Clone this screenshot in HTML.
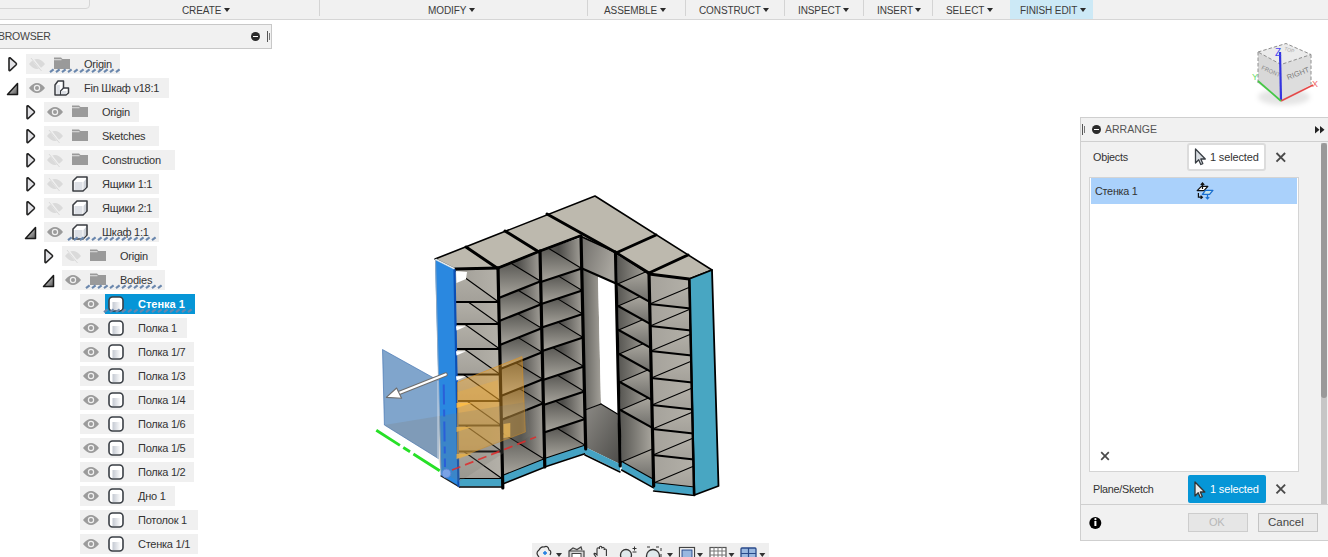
<!DOCTYPE html>
<html><head><meta charset="utf-8">
<style>
*{margin:0;padding:0;box-sizing:border-box}
html,body{width:1328px;height:557px;overflow:hidden;background:#fff;font-family:"Liberation Sans",sans-serif;color:#333}
.a{position:absolute}
.mi{position:absolute;top:5px;font-size:10px;line-height:11px;color:#3c3c3c;white-space:nowrap;letter-spacing:-0.1px}
.tri{display:inline-block;width:0;height:0;border-left:3.5px solid transparent;border-right:3.5px solid transparent;border-top:4.5px solid #2a2a2a;margin-left:2.5px;vertical-align:2px}
.sep{position:absolute;top:0;width:1px;height:16px;background:#d4d4d4}
.row{position:absolute;height:20px;background:#f0f0f0}
.t{position:absolute;font-size:11px;line-height:13px;color:#333;white-space:nowrap;letter-spacing:-0.25px}
</style></head>
<body>

<div class="a" style="left:0;top:0;width:1328px;height:20px;background:#f1f1f1;border-bottom:1px solid #d6d6d6"></div>
<div class="a" style="left:-10px;top:-2px;width:100px;height:11px;border:1px solid #d6d6d6;border-radius:0 0 4px 0;background:#f1f1f1"></div>
<div class="a" style="left:1010px;top:0;width:83px;height:19px;background:#cce9f6"></div>
<div class="mi" style="left:182px">CREATE<span class="tri"></span></div>
<div class="mi" style="left:428px">MODIFY<span class="tri"></span></div>
<div class="mi" style="left:604px">ASSEMBLE<span class="tri"></span></div>
<div class="mi" style="left:699px">CONSTRUCT<span class="tri"></span></div>
<div class="mi" style="left:798px">INSPECT<span class="tri"></span></div>
<div class="mi" style="left:877px">INSERT<span class="tri"></span></div>
<div class="mi" style="left:946px">SELECT<span class="tri"></span></div>
<div class="mi" style="left:1020px">FINISH EDIT<span class="tri"></span></div>
<div class="sep" style="left:319px"></div>
<div class="sep" style="left:587px"></div>
<div class="sep" style="left:685px"></div>
<div class="sep" style="left:784px"></div>
<div class="sep" style="left:863px"></div>
<div class="sep" style="left:932px"></div>
<div class="a" style="left:-2px;top:24px;width:274px;height:25px;background:#f1f1f1;border:1px solid #c8c8c8"></div>
<div class="t" style="left:-2px;top:30px;font-size:10.5px;color:#444;letter-spacing:-0.25px">BROWSER</div>
<div class="a" style="left:251px;top:32px;width:9px;height:9px;border-radius:50%;background:#2b2b2b"></div>
<div class="a" style="left:253px;top:36px;width:5px;height:1px;background:#fff"></div>
<div class="a" style="left:267px;top:31px;width:1px;height:11px;background:#555"></div>
<div class="a" style="left:269px;top:33px;width:1px;height:7px;background:#777"></div>
<div class="row" style="left:26px;top:54px;width:94px"></div>
<div class="t" style="left:84px;top:58px">Origin</div>
<div class="row" style="left:26px;top:78px;width:143px"></div>
<div class="t" style="left:84px;top:82px">Fin Шкаф v18:1</div>
<div class="row" style="left:44px;top:102px;width:95px"></div>
<div class="t" style="left:102px;top:106px">Origin</div>
<div class="row" style="left:44px;top:126px;width:115px"></div>
<div class="t" style="left:102px;top:130px">Sketches</div>
<div class="row" style="left:44px;top:150px;width:131px"></div>
<div class="t" style="left:102px;top:154px">Construction</div>
<div class="row" style="left:44px;top:174px;width:115px"></div>
<div class="t" style="left:102px;top:178px">Ящики 1:1</div>
<div class="row" style="left:44px;top:198px;width:115px"></div>
<div class="t" style="left:102px;top:202px">Ящики 2:1</div>
<div class="row" style="left:44px;top:222px;width:115px"></div>
<div class="t" style="left:102px;top:226px">Шкаф 1:1</div>
<div class="row" style="left:62px;top:246px;width:95px"></div>
<div class="t" style="left:120px;top:250px">Origin</div>
<div class="row" style="left:62px;top:270px;width:103px"></div>
<div class="t" style="left:120px;top:274px">Bodies</div>
<div class="row" style="left:80px;top:294px;width:115px"></div>
<div class="a" style="left:105px;top:294px;width:90px;height:20px;background:#0696d7"></div>
<div class="t" style="left:138px;top:298px;color:#fff;font-weight:bold;letter-spacing:0">Стенка 1</div>
<div class="row" style="left:80px;top:318px;width:107px"></div>
<div class="t" style="left:138px;top:322px">Полка 1</div>
<div class="row" style="left:80px;top:342px;width:114px"></div>
<div class="t" style="left:138px;top:346px">Полка 1/7</div>
<div class="row" style="left:80px;top:366px;width:114px"></div>
<div class="t" style="left:138px;top:370px">Полка 1/3</div>
<div class="row" style="left:80px;top:390px;width:114px"></div>
<div class="t" style="left:138px;top:394px">Полка 1/4</div>
<div class="row" style="left:80px;top:414px;width:114px"></div>
<div class="t" style="left:138px;top:418px">Полка 1/6</div>
<div class="row" style="left:80px;top:438px;width:114px"></div>
<div class="t" style="left:138px;top:442px">Полка 1/5</div>
<div class="row" style="left:80px;top:462px;width:114px"></div>
<div class="t" style="left:138px;top:466px">Полка 1/2</div>
<div class="row" style="left:80px;top:486px;width:95px"></div>
<div class="t" style="left:138px;top:490px">Дно 1</div>
<div class="row" style="left:80px;top:510px;width:118px"></div>
<div class="t" style="left:138px;top:514px">Потолок 1</div>
<div class="row" style="left:80px;top:534px;width:118px"></div>
<div class="t" style="left:138px;top:538px">Стенка 1/1</div>
<div class="a" style="left:1080px;top:117px;width:260px;height:424px;background:#f1f1f1;border:1px solid #cfcfcf"></div>
<div class="a" style="left:1080px;top:141px;width:260px;height:1px;background:#cfcfcf"></div>
<div class="a" style="left:1082px;top:124px;width:1px;height:11px;background:#555"></div>
<div class="a" style="left:1084px;top:126px;width:1px;height:7px;background:#777"></div>
<div class="a" style="left:1092px;top:125px;width:9px;height:9px;border-radius:50%;background:#2b2b2b"></div>
<div class="a" style="left:1094px;top:129px;width:5px;height:1px;background:#fff"></div>
<div class="t" style="left:1105px;top:123px;font-size:10.5px;color:#555;letter-spacing:0">ARRANGE</div>
<div class="t" style="left:1093px;top:151px;font-size:10.8px">Objects</div>
<div class="a" style="left:1187px;top:143px;width:79px;height:28px;background:#fff;border:2px solid #dcdcdc;border-radius:3px"></div>
<div class="t" style="left:1210px;top:151px;font-size:11px;letter-spacing:-0.15px">1 selected</div>
<div class="a" style="left:1321px;top:143px;width:6px;height:361px;background:#c6c6c6"></div><div class="a" style="left:1321px;top:143px;width:6px;height:255px;background:#999;border-radius:3px"></div>
<div class="a" style="left:1089px;top:177px;width:210px;height:295px;background:#fff;border:1px solid #d4d4d4"></div>
<div class="a" style="left:1091px;top:178px;width:206px;height:26px;background:#aad1fb"></div>
<div class="t" style="left:1095px;top:185px;font-size:10.8px">Стенка 1</div>
<div class="t" style="left:1093px;top:483px;font-size:10.8px">Plane/Sketch</div>
<div class="a" style="left:1187.5px;top:475px;width:78px;height:27.5px;background:#0696d7;border-radius:2px"></div>
<div class="t" style="left:1210px;top:483px;font-size:11px;letter-spacing:-0.15px;color:#fff">1 selected</div>
<div class="a" style="left:1080px;top:504px;width:248px;height:1px;background:#cfcfcf"></div>
<div class="a" style="left:1188px;top:513px;width:60px;height:19px;background:#e6e6e6;border:1px solid #cdcdcd"></div>
<div class="t" style="left:1209px;top:516px;font-size:11px;color:#b8b8b8">OK</div>
<div class="a" style="left:1258px;top:513px;width:60px;height:19px;background:#eaeaea;border:1px solid #c4c4c4"></div>
<div class="t" style="left:1268px;top:516px;font-size:11.5px;color:#444;letter-spacing:0">Cancel</div>
<div class="a" style="left:532px;top:543px;width:237px;height:14px;background:#efefef"></div>

<svg class="a" style="left:0;top:0" width="1328" height="557" viewBox="0 0 1328 557">
<defs>
<linearGradient id="gtri" x1="0" y1="0" x2="1" y2="1"><stop offset="0" stop-color="#f4f4f4"/><stop offset="1" stop-color="#555"/></linearGradient>
<linearGradient id="gbody" x1="0" y1="0" x2="1" y2="0"><stop offset="0" stop-color="#c4c9d2"/><stop offset="1" stop-color="#fff"/></linearGradient>
<linearGradient id="gwall" x1="0" y1="0" x2="1" y2="0.3"><stop offset="0" stop-color="#a9a69f"/><stop offset="0.6" stop-color="#6f6d69"/><stop offset="1" stop-color="#3e3d3b"/></linearGradient>
<linearGradient id="gwall2" x1="0" y1="0" x2="1" y2="0"><stop offset="0" stop-color="#44433f"/><stop offset="0.5" stop-color="#7a7873"/><stop offset="1" stop-color="#a8a59e"/></linearGradient>
<linearGradient id="gshelf" x1="0" y1="0" x2="1" y2="0"><stop offset="0" stop-color="#8e8b85"/><stop offset="1" stop-color="#b8b4ab"/></linearGradient>
<linearGradient id="gML" x1="0" y1="0" x2="1" y2="0"><stop offset="0" stop-color="#5a5955"/><stop offset="0.45" stop-color="#4d4c49"/><stop offset="1" stop-color="#a29f98"/></linearGradient>
<linearGradient id="gSML" x1="0" y1="0" x2="0" y2="1"><stop offset="0" stop-color="#5a5955"/><stop offset="1" stop-color="#aaa79f"/></linearGradient>
<linearGradient id="gMR" x1="0" y1="0" x2="1" y2="0"><stop offset="0" stop-color="#585753"/><stop offset="1" stop-color="#aba8a0"/></linearGradient>
<linearGradient id="gSMR" x1="0" y1="0" x2="0" y2="1"><stop offset="0" stop-color="#a9a69e"/><stop offset="1" stop-color="#6e6d69"/></linearGradient>
<linearGradient id="gEL" x1="0" y1="0" x2="1" y2="0"><stop offset="0" stop-color="#a19e97"/><stop offset="1" stop-color="#b4b1a9"/></linearGradient>
<linearGradient id="gER" x1="0" y1="0" x2="1" y2="0"><stop offset="0" stop-color="#a5a29b"/><stop offset="1" stop-color="#b3b0a8"/></linearGradient>
<linearGradient id="gSE" x1="0" y1="0" x2="0" y2="1"><stop offset="0" stop-color="#b3b0a8"/><stop offset="1" stop-color="#a3a099"/></linearGradient>
<linearGradient id="gcor" x1="0" y1="0" x2="1" y2="0.4"><stop offset="0" stop-color="#6f6d69"/><stop offset="1" stop-color="#a8a59e"/></linearGradient>
<linearGradient id="gin" x1="0" y1="0" x2="1" y2="0"><stop offset="0" stop-color="#5c5b57"/><stop offset="1" stop-color="#a29f98"/></linearGradient>
<linearGradient id="gfl" x1="0" y1="0" x2="1" y2="1"><stop offset="0" stop-color="#8c8a85"/><stop offset="1" stop-color="#4d4c49"/></linearGradient>
<filter id="blur2" x="-50%" y="-50%" width="200%" height="200%"><feGaussianBlur stdDeviation="2.5"/></filter>
<linearGradient id="gcube" x1="0" y1="0" x2="0" y2="1"><stop offset="0" stop-color="#f2f2f2"/><stop offset="1" stop-color="#d4d4d4"/></linearGradient>
</defs>
<path d="M9,58.5 L9,70 Q9,71 10,70.5 L16,65 Q17,64 16,63 L10,57.8 Q9,57.5 9,58.5Z" fill="#e2e2e6" stroke="#222" stroke-width="1.6"/>
<path d="M29,64 Q37,54 45,64 Q37,74 29,64Z" fill="#dadada"/>
<line x1="31" y1="57" x2="42" y2="71" stroke="#f0f0f0" stroke-width="2.2"/>
<line x1="31" y1="58" x2="41.5" y2="71" stroke="#dadada" stroke-width="1"/>
<path d="M54,57.5 h7 l1.5,1.5 h7.5 v10 h-16z" fill="#9a9a9a"/>
<rect x="54" y="59.3" width="7.5" height="0.9" fill="#e8e8e8"/>
<path d="M50,72.2 l3.6,-2.8 M56,72.2 l3.6,-2.8 M62,72.2 l3.6,-2.8 M68,72.2 l3.6,-2.8 M74,72.2 l3.6,-2.8 M80,72.2 l3.6,-2.8 M86,72.2 l3.6,-2.8 M92,72.2 l3.6,-2.8 M98,72.2 l3.6,-2.8 M104,72.2 l3.6,-2.8 M110,72.2 l3.6,-2.8 M116,72.2 l3.6,-2.8 " stroke="#6a87ad" stroke-width="2.1" fill="none"/>
<path d="M7.5,94.5 L17.5,94.5 L17.5,83.5 Z" fill="url(#gtri)" stroke="#1a1a1a" stroke-width="1.5" stroke-linejoin="round"/>
<path d="M29,88 Q37,78 45,88 Q37,98 29,88Z" fill="#9b9b9b"/>
<circle cx="37" cy="88" r="2.6" fill="none" stroke="#f0f0f0" stroke-width="1.2"/>
<path d="M55,85 L58,81 L63.5,81 L63.5,88 L68.5,88 L68.5,93 L66,95 L55,95Z" fill="#fff" stroke="#3a3d42" stroke-width="1.5" stroke-linejoin="round"/>
<path d="M60.5,95 L60.5,91 L63.5,88" fill="none" stroke="#3a3d42" stroke-width="1.3"/>
<rect x="56.3" y="85" width="3.5" height="9" fill="#dde0e6"/>
<rect x="61.5" y="91" width="5" height="3" fill="#dde0e6"/>
<path d="M27,106.5 L27,118 Q27,119 28,118.5 L34,113 Q35,112 34,111 L28,105.8 Q27,105.5 27,106.5Z" fill="#e2e2e6" stroke="#222" stroke-width="1.6"/>
<path d="M47,112 Q55,102 63,112 Q55,122 47,112Z" fill="#9b9b9b"/>
<circle cx="55" cy="112" r="2.6" fill="none" stroke="#f0f0f0" stroke-width="1.2"/>
<path d="M72,105.5 h7 l1.5,1.5 h7.5 v10 h-16z" fill="#9a9a9a"/>
<rect x="72" y="107.3" width="7.5" height="0.9" fill="#e8e8e8"/>
<path d="M27,130.5 L27,142 Q27,143 28,142.5 L34,137 Q35,136 34,135 L28,129.8 Q27,129.5 27,130.5Z" fill="#e2e2e6" stroke="#222" stroke-width="1.6"/>
<path d="M47,136 Q55,126 63,136 Q55,146 47,136Z" fill="#dadada"/>
<line x1="49" y1="129" x2="60" y2="143" stroke="#f0f0f0" stroke-width="2.2"/>
<line x1="49" y1="130" x2="59.5" y2="143" stroke="#dadada" stroke-width="1"/>
<path d="M72,129.5 h7 l1.5,1.5 h7.5 v10 h-16z" fill="#9a9a9a"/>
<rect x="72" y="131.3" width="7.5" height="0.9" fill="#e8e8e8"/>
<path d="M27,154.5 L27,166 Q27,167 28,166.5 L34,161 Q35,160 34,159 L28,153.8 Q27,153.5 27,154.5Z" fill="#e2e2e6" stroke="#222" stroke-width="1.6"/>
<path d="M47,160 Q55,150 63,160 Q55,170 47,160Z" fill="#dadada"/>
<line x1="49" y1="153" x2="60" y2="167" stroke="#f0f0f0" stroke-width="2.2"/>
<line x1="49" y1="154" x2="59.5" y2="167" stroke="#dadada" stroke-width="1"/>
<path d="M72,153.5 h7 l1.5,1.5 h7.5 v10 h-16z" fill="#9a9a9a"/>
<rect x="72" y="155.3" width="7.5" height="0.9" fill="#e8e8e8"/>
<path d="M27,178.5 L27,190 Q27,191 28,190.5 L34,185 Q35,184 34,183 L28,177.8 Q27,177.5 27,178.5Z" fill="#e2e2e6" stroke="#222" stroke-width="1.6"/>
<path d="M47,184 Q55,174 63,184 Q55,194 47,184Z" fill="#dadada"/>
<line x1="49" y1="177" x2="60" y2="191" stroke="#f0f0f0" stroke-width="2.2"/>
<line x1="49" y1="178" x2="59.5" y2="191" stroke="#dadada" stroke-width="1"/>
<path d="M73,181 L77,177 L87,177 L87,187 L83,191 L73,191Z" fill="#fff" stroke="#3a3d42" stroke-width="1.6" stroke-linejoin="round"/>
<rect x="74.5" y="182" width="8" height="8" fill="#dde0e6"/>
<path d="M83.5,182 L86,179 L86,187 L83.5,190Z" fill="#cfd3da"/>
<path d="M27,202.5 L27,214 Q27,215 28,214.5 L34,209 Q35,208 34,207 L28,201.8 Q27,201.5 27,202.5Z" fill="#e2e2e6" stroke="#222" stroke-width="1.6"/>
<path d="M47,208 Q55,198 63,208 Q55,218 47,208Z" fill="#dadada"/>
<line x1="49" y1="201" x2="60" y2="215" stroke="#f0f0f0" stroke-width="2.2"/>
<line x1="49" y1="202" x2="59.5" y2="215" stroke="#dadada" stroke-width="1"/>
<path d="M73,205 L77,201 L87,201 L87,211 L83,215 L73,215Z" fill="#fff" stroke="#3a3d42" stroke-width="1.6" stroke-linejoin="round"/>
<rect x="74.5" y="206" width="8" height="8" fill="#dde0e6"/>
<path d="M83.5,206 L86,203 L86,211 L83.5,214Z" fill="#cfd3da"/>
<path d="M25.5,238.5 L35.5,238.5 L35.5,227.5 Z" fill="url(#gtri)" stroke="#1a1a1a" stroke-width="1.5" stroke-linejoin="round"/>
<path d="M47,232 Q55,222 63,232 Q55,242 47,232Z" fill="#9b9b9b"/>
<circle cx="55" cy="232" r="2.6" fill="none" stroke="#f0f0f0" stroke-width="1.2"/>
<path d="M73,229 L77,225 L87,225 L87,235 L83,239 L73,239Z" fill="#fff" stroke="#3a3d42" stroke-width="1.6" stroke-linejoin="round"/>
<rect x="74.5" y="230" width="8" height="8" fill="#dde0e6"/>
<path d="M83.5,230 L86,227 L86,235 L83.5,238Z" fill="#cfd3da"/>
<path d="M68,240.2 l3.6,-2.8 M74,240.2 l3.6,-2.8 M80,240.2 l3.6,-2.8 M86,240.2 l3.6,-2.8 M92,240.2 l3.6,-2.8 M98,240.2 l3.6,-2.8 M104,240.2 l3.6,-2.8 M110,240.2 l3.6,-2.8 M116,240.2 l3.6,-2.8 M122,240.2 l3.6,-2.8 M128,240.2 l3.6,-2.8 M134,240.2 l3.6,-2.8 M140,240.2 l3.6,-2.8 M146,240.2 l3.6,-2.8 M152,240.2 l3.6,-2.8 " stroke="#6a87ad" stroke-width="2.1" fill="none"/>
<path d="M45,250.5 L45,262 Q45,263 46,262.5 L52,257 Q53,256 52,255 L46,249.8 Q45,249.5 45,250.5Z" fill="#e2e2e6" stroke="#222" stroke-width="1.6"/>
<path d="M65,256 Q73,246 81,256 Q73,266 65,256Z" fill="#dadada"/>
<line x1="67" y1="249" x2="78" y2="263" stroke="#f0f0f0" stroke-width="2.2"/>
<line x1="67" y1="250" x2="77.5" y2="263" stroke="#dadada" stroke-width="1"/>
<path d="M90,249.5 h7 l1.5,1.5 h7.5 v10 h-16z" fill="#9a9a9a"/>
<rect x="90" y="251.3" width="7.5" height="0.9" fill="#e8e8e8"/>
<path d="M43.5,286.5 L53.5,286.5 L53.5,275.5 Z" fill="url(#gtri)" stroke="#1a1a1a" stroke-width="1.5" stroke-linejoin="round"/>
<path d="M65,280 Q73,270 81,280 Q73,290 65,280Z" fill="#9b9b9b"/>
<circle cx="73" cy="280" r="2.6" fill="none" stroke="#f0f0f0" stroke-width="1.2"/>
<path d="M90,273.5 h7 l1.5,1.5 h7.5 v10 h-16z" fill="#9a9a9a"/>
<rect x="90" y="275.3" width="7.5" height="0.9" fill="#e8e8e8"/>
<path d="M86,288.2 l3.6,-2.8 M92,288.2 l3.6,-2.8 M98,288.2 l3.6,-2.8 M104,288.2 l3.6,-2.8 M110,288.2 l3.6,-2.8 M116,288.2 l3.6,-2.8 M122,288.2 l3.6,-2.8 M128,288.2 l3.6,-2.8 M134,288.2 l3.6,-2.8 M140,288.2 l3.6,-2.8 M146,288.2 l3.6,-2.8 M152,288.2 l3.6,-2.8 M158,288.2 l3.6,-2.8 " stroke="#6a87ad" stroke-width="2.1" fill="none"/>
<path d="M83,304 Q91,294 99,304 Q91,314 83,304Z" fill="#9b9b9b"/>
<circle cx="91" cy="304" r="2.6" fill="none" stroke="#f0f0f0" stroke-width="1.2"/>
<rect x="109" y="297" width="14" height="14" rx="3.5" fill="#fff" stroke="#3a3f45" stroke-width="1.6"/>
<rect x="112.5" y="302" width="8.5" height="8" fill="url(#gbody)"/>
<path d="M104,312.2 l3.6,-2.8 M110,312.2 l3.6,-2.8 M116,312.2 l3.6,-2.8 M122,312.2 l3.6,-2.8 M128,312.2 l3.6,-2.8 M134,312.2 l3.6,-2.8 M140,312.2 l3.6,-2.8 M146,312.2 l3.6,-2.8 M152,312.2 l3.6,-2.8 M158,312.2 l3.6,-2.8 M164,312.2 l3.6,-2.8 M170,312.2 l3.6,-2.8 M176,312.2 l3.6,-2.8 M182,312.2 l3.6,-2.8 M188,312.2 l3.6,-2.8 " stroke="#6a87ad" stroke-width="2.1" fill="none"/>
<path d="M83,328 Q91,318 99,328 Q91,338 83,328Z" fill="#9b9b9b"/>
<circle cx="91" cy="328" r="2.6" fill="none" stroke="#f0f0f0" stroke-width="1.2"/>
<rect x="109" y="321" width="14" height="14" rx="3.5" fill="#fff" stroke="#3a3f45" stroke-width="1.6"/>
<rect x="112.5" y="326" width="8.5" height="8" fill="url(#gbody)"/>
<path d="M83,352 Q91,342 99,352 Q91,362 83,352Z" fill="#9b9b9b"/>
<circle cx="91" cy="352" r="2.6" fill="none" stroke="#f0f0f0" stroke-width="1.2"/>
<rect x="109" y="345" width="14" height="14" rx="3.5" fill="#fff" stroke="#3a3f45" stroke-width="1.6"/>
<rect x="112.5" y="350" width="8.5" height="8" fill="url(#gbody)"/>
<path d="M83,376 Q91,366 99,376 Q91,386 83,376Z" fill="#9b9b9b"/>
<circle cx="91" cy="376" r="2.6" fill="none" stroke="#f0f0f0" stroke-width="1.2"/>
<rect x="109" y="369" width="14" height="14" rx="3.5" fill="#fff" stroke="#3a3f45" stroke-width="1.6"/>
<rect x="112.5" y="374" width="8.5" height="8" fill="url(#gbody)"/>
<path d="M83,400 Q91,390 99,400 Q91,410 83,400Z" fill="#9b9b9b"/>
<circle cx="91" cy="400" r="2.6" fill="none" stroke="#f0f0f0" stroke-width="1.2"/>
<rect x="109" y="393" width="14" height="14" rx="3.5" fill="#fff" stroke="#3a3f45" stroke-width="1.6"/>
<rect x="112.5" y="398" width="8.5" height="8" fill="url(#gbody)"/>
<path d="M83,424 Q91,414 99,424 Q91,434 83,424Z" fill="#9b9b9b"/>
<circle cx="91" cy="424" r="2.6" fill="none" stroke="#f0f0f0" stroke-width="1.2"/>
<rect x="109" y="417" width="14" height="14" rx="3.5" fill="#fff" stroke="#3a3f45" stroke-width="1.6"/>
<rect x="112.5" y="422" width="8.5" height="8" fill="url(#gbody)"/>
<path d="M83,448 Q91,438 99,448 Q91,458 83,448Z" fill="#9b9b9b"/>
<circle cx="91" cy="448" r="2.6" fill="none" stroke="#f0f0f0" stroke-width="1.2"/>
<rect x="109" y="441" width="14" height="14" rx="3.5" fill="#fff" stroke="#3a3f45" stroke-width="1.6"/>
<rect x="112.5" y="446" width="8.5" height="8" fill="url(#gbody)"/>
<path d="M83,472 Q91,462 99,472 Q91,482 83,472Z" fill="#9b9b9b"/>
<circle cx="91" cy="472" r="2.6" fill="none" stroke="#f0f0f0" stroke-width="1.2"/>
<rect x="109" y="465" width="14" height="14" rx="3.5" fill="#fff" stroke="#3a3f45" stroke-width="1.6"/>
<rect x="112.5" y="470" width="8.5" height="8" fill="url(#gbody)"/>
<path d="M83,496 Q91,486 99,496 Q91,506 83,496Z" fill="#9b9b9b"/>
<circle cx="91" cy="496" r="2.6" fill="none" stroke="#f0f0f0" stroke-width="1.2"/>
<rect x="109" y="489" width="14" height="14" rx="3.5" fill="#fff" stroke="#3a3f45" stroke-width="1.6"/>
<rect x="112.5" y="494" width="8.5" height="8" fill="url(#gbody)"/>
<path d="M83,520 Q91,510 99,520 Q91,530 83,520Z" fill="#9b9b9b"/>
<circle cx="91" cy="520" r="2.6" fill="none" stroke="#f0f0f0" stroke-width="1.2"/>
<rect x="109" y="513" width="14" height="14" rx="3.5" fill="#fff" stroke="#3a3f45" stroke-width="1.6"/>
<rect x="112.5" y="518" width="8.5" height="8" fill="url(#gbody)"/>
<path d="M83,544 Q91,534 99,544 Q91,554 83,544Z" fill="#9b9b9b"/>
<circle cx="91" cy="544" r="2.6" fill="none" stroke="#f0f0f0" stroke-width="1.2"/>
<rect x="109" y="537" width="14" height="14" rx="3.5" fill="#fff" stroke="#3a3f45" stroke-width="1.6"/>
<rect x="112.5" y="542" width="8.5" height="8" fill="url(#gbody)"/>
<path d="M1276.5,153.0 L1285.1,161.60000000000002 M1285.1,153.0 L1276.5,161.60000000000002" stroke="#4a4a4a" stroke-width="1.9"/>
<path d="M1276.5,484.7 L1285.1,493.3 M1285.1,484.7 L1276.5,493.3" stroke="#4a4a4a" stroke-width="1.9"/>
<path d="M1101.2,452.2 L1108.8,459.8 M1108.8,452.2 L1101.2,459.8" stroke="#4a4a4a" stroke-width="1.7"/>
<path d="M1315,126 l4.5,3.8 l-4.5,3.8z M1320,126 l4.5,3.8 l-4.5,3.8z" fill="#222"/>
<circle cx="1095.3" cy="523" r="6" fill="#000"/><rect x="1094.4" y="521" width="2" height="5" fill="#fff"/><circle cx="1095.4" cy="519.2" r="1.1" fill="#fff"/>
<path d="M1195.5,149 L1195.5,163 L1198.7,159.8 L1200.8,164.5 L1202.8,163.6 L1200.8,159 L1205.3,159Z" fill="#d9dde2" stroke="#3a3f45" stroke-width="1.3" stroke-linejoin="round"/>
<path d="M1195,482 L1195,496 L1198.2,492.8 L1200.3,497.5 L1202.3,496.6 L1200.3,492 L1204.8,492Z" fill="#eee" stroke="#333" stroke-width="1.3" stroke-linejoin="round"/>
<path d="M1197.2,190.6 L1201.4,186.4 L1207.8,186.4 L1204,190.6Z" fill="#fff" stroke="#111" stroke-width="1.3" stroke-linejoin="round"/>
<path d="M1202.5,189 V183.5 M1200.8,185 L1202.5,183 L1204.2,185" fill="none" stroke="#111" stroke-width="1.2"/>
<path d="M1198.4,193 V197.2 H1202 M1200.6,195.6 L1202.4,197.2 L1200.6,198.8" fill="none" stroke="#111" stroke-width="1.2"/>
<path d="M1202.4,194.4 L1205.4,190.4 L1212.9,190.4 L1209.6,194.4Z" fill="#c8e4ec" stroke="#1a6fd0" stroke-width="1.3" stroke-linejoin="round"/>
<path d="M1207.5,194.6 V198.8 M1205.8,197.2 L1207.5,199 L1209.2,197.2" fill="none" stroke="#1a6fd0" stroke-width="1.2"/>
<polygon points="455.0,269.0 498.0,269.0 498.7,302.0 455.7,302.0" fill="url(#gEL)" />
<polygon points="455.7,271.0 498.7,302.0 455.7,302.0" fill="url(#gSE)" />
<line x1="455.7" y1="271.0" x2="498.7" y2="302.0" stroke="#000" stroke-width="1.1" stroke-linecap="round"/>
<polygon points="455.7,302.0 498.7,302.0 499.2,324.0 456.2,324.0" fill="url(#gEL)" />
<polygon points="455.7,302.0 468.2,302.0 499.2,324.0 456.2,324.0" fill="url(#gSE)" />
<line x1="468.2" y1="302.0" x2="499.2" y2="324.0" stroke="#000" stroke-width="1.1" stroke-linecap="round"/>
<polygon points="456.2,324.0 499.2,324.0 499.8,349.0 456.8,349.0" fill="url(#gEL)" />
<polygon points="456.2,324.0 464.5,324.0 499.8,349.0 456.8,349.0" fill="url(#gSE)" />
<line x1="464.5" y1="324.0" x2="499.8" y2="349.0" stroke="#000" stroke-width="1.1" stroke-linecap="round"/>
<polygon points="456.8,349.0 499.8,349.0 500.3,374.5 457.3,374.5" fill="url(#gEL)" />
<polygon points="456.8,349.0 464.3,349.0 500.3,374.5 457.3,374.5" fill="url(#gSE)" />
<line x1="464.3" y1="349.0" x2="500.3" y2="374.5" stroke="#000" stroke-width="1.1" stroke-linecap="round"/>
<polygon points="457.3,374.5 500.3,374.5 500.9,401.0 457.9,401.0" fill="url(#gEL)" />
<polygon points="457.3,374.5 463.5,374.5 500.9,401.0 457.9,401.0" fill="url(#gSE)" />
<line x1="463.5" y1="374.5" x2="500.9" y2="401.0" stroke="#000" stroke-width="1.1" stroke-linecap="round"/>
<polygon points="457.9,401.0 500.9,401.0 501.4,425.5 458.4,425.5" fill="url(#gEL)" />
<polygon points="457.9,401.0 466.9,401.0 501.4,425.5 458.4,425.5" fill="url(#gSE)" />
<line x1="466.9" y1="401.0" x2="501.4" y2="425.5" stroke="#000" stroke-width="1.1" stroke-linecap="round"/>
<polygon points="458.4,425.5 501.4,425.5 502.0,451.5 459.0,451.5" fill="url(#gEL)" />
<polygon points="458.4,425.5 465.3,425.5 502.0,451.5 459.0,451.5" fill="url(#gSE)" />
<line x1="465.3" y1="425.5" x2="502.0" y2="451.5" stroke="#000" stroke-width="1.1" stroke-linecap="round"/>
<polygon points="459.0,451.5 502.0,451.5 502.6,479.0 459.6,479.0" fill="url(#gEL)" />
<polygon points="459.0,451.5 463.8,451.5 502.6,479.0 459.6,479.0" fill="url(#gSE)" />
<line x1="463.8" y1="451.5" x2="502.6" y2="479.0" stroke="#000" stroke-width="1.1" stroke-linecap="round"/>
<line x1="455.7" y1="302.0" x2="498.7" y2="302.0" stroke="#000" stroke-width="2.2" stroke-linecap="round"/>
<line x1="456.2" y1="324.0" x2="499.2" y2="324.0" stroke="#000" stroke-width="2.2" stroke-linecap="round"/>
<line x1="456.8" y1="349.0" x2="499.8" y2="349.0" stroke="#000" stroke-width="2.2" stroke-linecap="round"/>
<line x1="457.3" y1="374.5" x2="500.3" y2="374.5" stroke="#000" stroke-width="2.2" stroke-linecap="round"/>
<line x1="457.9" y1="401.0" x2="500.9" y2="401.0" stroke="#000" stroke-width="2.2" stroke-linecap="round"/>
<line x1="458.4" y1="425.5" x2="501.4" y2="425.5" stroke="#000" stroke-width="2.2" stroke-linecap="round"/>
<line x1="459.0" y1="451.5" x2="502.0" y2="451.5" stroke="#000" stroke-width="2.2" stroke-linecap="round"/>
<line x1="459.6" y1="479.0" x2="502.6" y2="479.0" stroke="#000" stroke-width="2.2" stroke-linecap="round"/>
<polygon points="459.6,479.0 502.6,479.0 502.8,486.5 459.8,486.5" fill="#45a3c4" />
<line x1="459.6" y1="487.0" x2="502.6" y2="487.0" stroke="#000" stroke-width="1.6" stroke-linecap="round"/>
<polygon points="498.0,268.0 540.0,251.2 540.7,281.2 498.7,298.0" fill="url(#gML)" />
<polygon points="498.0,268.0 510.6,263.0 540.7,281.2 498.7,298.0" fill="url(#gSML)" />
<line x1="510.6" y1="263.0" x2="540.7" y2="281.2" stroke="#000" stroke-width="1.1" stroke-linecap="round"/>
<polygon points="498.7,298.0 540.7,281.2 541.2,304.2 499.2,321.0" fill="url(#gML)" />
<polygon points="498.7,298.0 518.1,290.2 541.2,304.2 499.2,321.0" fill="url(#gSML)" />
<line x1="518.1" y1="290.2" x2="541.2" y2="304.2" stroke="#000" stroke-width="1.1" stroke-linecap="round"/>
<polygon points="499.2,321.0 541.2,304.2 541.7,328.2 499.7,345.0" fill="url(#gML)" />
<polygon points="499.2,321.0 517.6,313.6 541.7,328.2 499.7,345.0" fill="url(#gSML)" />
<line x1="517.6" y1="313.6" x2="541.7" y2="328.2" stroke="#000" stroke-width="1.1" stroke-linecap="round"/>
<polygon points="499.7,345.0 541.7,328.2 542.2,352.2 500.2,369.0" fill="url(#gML)" />
<polygon points="499.7,345.0 518.2,337.6 542.2,352.2 500.2,369.0" fill="url(#gSML)" />
<line x1="518.2" y1="337.6" x2="542.2" y2="352.2" stroke="#000" stroke-width="1.1" stroke-linecap="round"/>
<polygon points="500.2,369.0 542.2,352.2 542.8,379.2 500.8,396.0" fill="url(#gML)" />
<polygon points="500.2,369.0 515.8,362.8 542.8,379.2 500.8,396.0" fill="url(#gSML)" />
<line x1="515.8" y1="362.8" x2="542.8" y2="379.2" stroke="#000" stroke-width="1.1" stroke-linecap="round"/>
<polygon points="500.8,396.0 542.8,379.2 543.3,403.2 501.3,420.0" fill="url(#gML)" />
<polygon points="500.8,396.0 519.3,388.6 543.3,403.2 501.3,420.0" fill="url(#gSML)" />
<line x1="519.3" y1="388.6" x2="543.3" y2="403.2" stroke="#000" stroke-width="1.1" stroke-linecap="round"/>
<polygon points="501.3,420.0 543.3,403.2 544.6,459.2 502.6,476.0" fill="url(#gML)" />
<polygon points="502.6,433.2 544.6,459.2 502.6,476.0" fill="url(#gSML)" />
<line x1="502.6" y1="433.2" x2="544.6" y2="459.2" stroke="#000" stroke-width="1.1" stroke-linecap="round"/>
<line x1="498.7" y1="298.0" x2="540.7" y2="281.2" stroke="#000" stroke-width="2.2" stroke-linecap="round"/>
<line x1="499.2" y1="321.0" x2="541.2" y2="304.2" stroke="#000" stroke-width="2.2" stroke-linecap="round"/>
<line x1="499.7" y1="345.0" x2="541.7" y2="328.2" stroke="#000" stroke-width="2.2" stroke-linecap="round"/>
<line x1="500.2" y1="369.0" x2="542.2" y2="352.2" stroke="#000" stroke-width="2.2" stroke-linecap="round"/>
<line x1="500.8" y1="396.0" x2="542.8" y2="379.2" stroke="#000" stroke-width="2.2" stroke-linecap="round"/>
<line x1="501.3" y1="420.0" x2="543.3" y2="403.2" stroke="#000" stroke-width="2.2" stroke-linecap="round"/>
<line x1="502.6" y1="476.0" x2="544.6" y2="459.2" stroke="#000" stroke-width="2.2" stroke-linecap="round"/>
<polygon points="502.6,476.0 544.6,459.2 544.8,466.7 502.8,483.5" fill="#45a3c4" />
<line x1="502.6" y1="484.0" x2="544.6" y2="467.2" stroke="#000" stroke-width="1.6" stroke-linecap="round"/>
<polygon points="540.0,251.0 581.0,237.5 581.7,268.5 540.7,282.0" fill="url(#gML)" />
<polygon points="540.0,251.0 548.4,248.2 581.7,268.5 540.7,282.0" fill="url(#gSML)" />
<line x1="548.4" y1="248.2" x2="581.7" y2="268.5" stroke="#000" stroke-width="1.1" stroke-linecap="round"/>
<polygon points="540.7,282.0 581.7,268.5 582.2,290.5 541.2,304.0" fill="url(#gML)" />
<polygon points="540.7,282.0 558.5,276.1 582.2,290.5 541.2,304.0" fill="url(#gSML)" />
<line x1="558.5" y1="276.1" x2="582.2" y2="290.5" stroke="#000" stroke-width="1.1" stroke-linecap="round"/>
<polygon points="541.2,304.0 582.2,290.5 582.7,314.0 541.7,327.5" fill="url(#gML)" />
<polygon points="541.2,304.0 557.4,298.6 582.7,314.0 541.7,327.5" fill="url(#gSML)" />
<line x1="557.4" y1="298.6" x2="582.7" y2="314.0" stroke="#000" stroke-width="1.1" stroke-linecap="round"/>
<polygon points="541.7,327.5 582.7,314.0 583.2,337.5 542.2,351.0" fill="url(#gML)" />
<polygon points="541.7,327.5 557.9,322.1 583.2,337.5 542.2,351.0" fill="url(#gSML)" />
<line x1="557.9" y1="322.1" x2="583.2" y2="337.5" stroke="#000" stroke-width="1.1" stroke-linecap="round"/>
<polygon points="542.2,351.0 583.2,337.5 583.8,366.5 542.8,380.0" fill="url(#gML)" />
<polygon points="542.2,351.0 552.7,347.5 583.8,366.5 542.8,380.0" fill="url(#gSML)" />
<line x1="552.7" y1="347.5" x2="583.8" y2="366.5" stroke="#000" stroke-width="1.1" stroke-linecap="round"/>
<polygon points="542.8,380.0 583.8,366.5 584.4,391.5 543.4,405.0" fill="url(#gML)" />
<polygon points="542.8,380.0 557.5,375.2 584.4,391.5 543.4,405.0" fill="url(#gSML)" />
<line x1="557.5" y1="375.2" x2="584.4" y2="391.5" stroke="#000" stroke-width="1.1" stroke-linecap="round"/>
<polygon points="543.4,405.0 584.4,391.5 585.0,419.0 544.0,432.5" fill="url(#gML)" />
<polygon points="543.4,405.0 555.4,401.0 585.0,419.0 544.0,432.5" fill="url(#gSML)" />
<line x1="555.4" y1="401.0" x2="585.0" y2="419.0" stroke="#000" stroke-width="1.1" stroke-linecap="round"/>
<polygon points="544.0,432.5 585.0,419.0 585.6,445.5 544.6,459.0" fill="url(#gML)" />
<polygon points="544.0,432.5 557.1,428.2 585.6,445.5 544.6,459.0" fill="url(#gSML)" />
<line x1="557.1" y1="428.2" x2="585.6" y2="445.5" stroke="#000" stroke-width="1.1" stroke-linecap="round"/>
<line x1="540.7" y1="282.0" x2="581.7" y2="268.5" stroke="#000" stroke-width="2.2" stroke-linecap="round"/>
<line x1="541.2" y1="304.0" x2="582.2" y2="290.5" stroke="#000" stroke-width="2.2" stroke-linecap="round"/>
<line x1="541.7" y1="327.5" x2="582.7" y2="314.0" stroke="#000" stroke-width="2.2" stroke-linecap="round"/>
<line x1="542.2" y1="351.0" x2="583.2" y2="337.5" stroke="#000" stroke-width="2.2" stroke-linecap="round"/>
<line x1="542.8" y1="380.0" x2="583.8" y2="366.5" stroke="#000" stroke-width="2.2" stroke-linecap="round"/>
<line x1="543.4" y1="405.0" x2="584.4" y2="391.5" stroke="#000" stroke-width="2.2" stroke-linecap="round"/>
<line x1="544.0" y1="432.5" x2="585.0" y2="419.0" stroke="#000" stroke-width="2.2" stroke-linecap="round"/>
<line x1="544.6" y1="459.0" x2="585.6" y2="445.5" stroke="#000" stroke-width="2.2" stroke-linecap="round"/>
<polygon points="544.6,459.0 585.6,445.5 585.8,453.0 544.8,466.5" fill="#45a3c4" />
<line x1="544.6" y1="467.0" x2="585.6" y2="453.5" stroke="#000" stroke-width="1.6" stroke-linecap="round"/>
<polygon points="617.0,255.0 649.0,272.9 649.6,301.9 617.6,284.0" fill="url(#gMR)" />
<polygon points="617.6,284.0 646.6,271.6 649.0,272.9 649.6,301.9" fill="url(#gSMR)" />
<line x1="617.6" y1="284.0" x2="646.6" y2="271.6" stroke="#000" stroke-width="1.1" stroke-linecap="round"/>
<polygon points="617.6,284.0 649.6,301.9 650.1,323.9 618.1,306.0" fill="url(#gMR)" />
<polygon points="618.1,306.0 640.1,296.6 649.6,301.9 650.1,323.9" fill="url(#gSMR)" />
<line x1="618.1" y1="306.0" x2="640.1" y2="296.6" stroke="#000" stroke-width="1.1" stroke-linecap="round"/>
<polygon points="618.1,306.0 650.1,323.9 650.6,347.9 618.6,330.0" fill="url(#gMR)" />
<polygon points="618.6,330.0 642.6,319.7 650.1,323.9 650.6,347.9" fill="url(#gSMR)" />
<line x1="618.6" y1="330.0" x2="642.6" y2="319.7" stroke="#000" stroke-width="1.1" stroke-linecap="round"/>
<polygon points="618.6,330.0 650.6,347.9 651.2,371.9 619.2,354.0" fill="url(#gMR)" />
<polygon points="619.2,354.0 643.1,343.7 650.6,347.9 651.2,371.9" fill="url(#gSMR)" />
<line x1="619.2" y1="354.0" x2="643.1" y2="343.7" stroke="#000" stroke-width="1.1" stroke-linecap="round"/>
<polygon points="619.2,354.0 651.2,371.9 651.8,399.9 619.8,382.0" fill="url(#gMR)" />
<polygon points="619.8,382.0 647.7,370.0 651.2,371.9 651.8,399.9" fill="url(#gSMR)" />
<line x1="619.8" y1="382.0" x2="647.7" y2="370.0" stroke="#000" stroke-width="1.1" stroke-linecap="round"/>
<polygon points="619.8,382.0 651.8,399.9 652.4,427.9 620.4,410.0" fill="url(#gMR)" />
<polygon points="620.4,410.0 648.4,398.0 651.8,399.9 652.4,427.9" fill="url(#gSMR)" />
<line x1="620.4" y1="410.0" x2="648.4" y2="398.0" stroke="#000" stroke-width="1.1" stroke-linecap="round"/>
<polygon points="620.4,410.0 652.4,427.9 653.6,479.9 621.6,462.0" fill="url(#gMR)" />
<polygon points="621.6,462.0 653.6,448.6 653.6,479.9" fill="url(#gSMR)" />
<line x1="621.6" y1="462.0" x2="653.6" y2="448.6" stroke="#000" stroke-width="1.1" stroke-linecap="round"/>
<line x1="617.6" y1="284.0" x2="649.6" y2="301.9" stroke="#000" stroke-width="2.2" stroke-linecap="round"/>
<line x1="618.1" y1="306.0" x2="650.1" y2="323.9" stroke="#000" stroke-width="2.2" stroke-linecap="round"/>
<line x1="618.6" y1="330.0" x2="650.6" y2="347.9" stroke="#000" stroke-width="2.2" stroke-linecap="round"/>
<line x1="619.2" y1="354.0" x2="651.2" y2="371.9" stroke="#000" stroke-width="2.2" stroke-linecap="round"/>
<line x1="619.8" y1="382.0" x2="651.8" y2="399.9" stroke="#000" stroke-width="2.2" stroke-linecap="round"/>
<line x1="620.4" y1="410.0" x2="652.4" y2="427.9" stroke="#000" stroke-width="2.2" stroke-linecap="round"/>
<line x1="621.6" y1="462.0" x2="653.6" y2="479.9" stroke="#000" stroke-width="2.2" stroke-linecap="round"/>
<polygon points="621.6,462.0 653.6,479.9 653.8,487.4 621.8,469.5" fill="#45a3c4" />
<line x1="621.6" y1="470.0" x2="653.6" y2="487.9" stroke="#000" stroke-width="1.6" stroke-linecap="round"/>
<polygon points="649.0,274.0 690.0,278.5 690.7,308.5 649.7,304.0" fill="url(#gER)" />
<polygon points="649.7,304.0 690.7,286.8 690.7,308.5" fill="url(#gSE)" />
<line x1="649.7" y1="304.0" x2="690.7" y2="286.8" stroke="#000" stroke-width="1.1" stroke-linecap="round"/>
<polygon points="649.7,304.0 690.7,308.5 691.1,330.5 650.1,326.0" fill="url(#gER)" />
<polygon points="650.1,326.0 691.1,308.8 691.1,330.5" fill="url(#gSE)" />
<line x1="650.1" y1="326.0" x2="691.1" y2="308.8" stroke="#000" stroke-width="1.1" stroke-linecap="round"/>
<polygon points="650.1,326.0 691.1,330.5 691.7,355.5 650.7,351.0" fill="url(#gER)" />
<polygon points="650.7,351.0 691.7,333.8 691.7,355.5" fill="url(#gSE)" />
<line x1="650.7" y1="351.0" x2="691.7" y2="333.8" stroke="#000" stroke-width="1.1" stroke-linecap="round"/>
<polygon points="650.7,351.0 691.7,355.5 692.3,382.5 651.3,378.0" fill="url(#gER)" />
<polygon points="651.3,378.0 692.3,360.8 692.3,382.5" fill="url(#gSE)" />
<line x1="651.3" y1="378.0" x2="692.3" y2="360.8" stroke="#000" stroke-width="1.1" stroke-linecap="round"/>
<polygon points="651.3,378.0 692.3,382.5 692.9,409.5 651.9,405.0" fill="url(#gER)" />
<polygon points="651.9,405.0 692.9,387.8 692.9,409.5" fill="url(#gSE)" />
<line x1="651.9" y1="405.0" x2="692.9" y2="387.8" stroke="#000" stroke-width="1.1" stroke-linecap="round"/>
<polygon points="651.9,405.0 692.9,409.5 693.4,433.5 652.4,429.0" fill="url(#gER)" />
<polygon points="652.4,429.0 693.4,411.8 693.4,433.5" fill="url(#gSE)" />
<line x1="652.4" y1="429.0" x2="693.4" y2="411.8" stroke="#000" stroke-width="1.1" stroke-linecap="round"/>
<polygon points="652.4,429.0 693.4,433.5 694.0,459.5 653.0,455.0" fill="url(#gER)" />
<polygon points="653.0,455.0 694.0,437.8 694.0,459.5" fill="url(#gSE)" />
<line x1="653.0" y1="455.0" x2="694.0" y2="437.8" stroke="#000" stroke-width="1.1" stroke-linecap="round"/>
<polygon points="653.0,455.0 694.0,459.5 694.6,487.5 653.6,483.0" fill="url(#gER)" />
<polygon points="653.6,483.0 694.6,465.8 694.6,487.5" fill="url(#gSE)" />
<line x1="653.6" y1="483.0" x2="694.6" y2="465.8" stroke="#000" stroke-width="1.1" stroke-linecap="round"/>
<line x1="649.7" y1="304.0" x2="690.7" y2="308.5" stroke="#000" stroke-width="2.2" stroke-linecap="round"/>
<line x1="650.1" y1="326.0" x2="691.1" y2="330.5" stroke="#000" stroke-width="2.2" stroke-linecap="round"/>
<line x1="650.7" y1="351.0" x2="691.7" y2="355.5" stroke="#000" stroke-width="2.2" stroke-linecap="round"/>
<line x1="651.3" y1="378.0" x2="692.3" y2="382.5" stroke="#000" stroke-width="2.2" stroke-linecap="round"/>
<line x1="651.9" y1="405.0" x2="692.9" y2="409.5" stroke="#000" stroke-width="2.2" stroke-linecap="round"/>
<line x1="652.4" y1="429.0" x2="693.4" y2="433.5" stroke="#000" stroke-width="2.2" stroke-linecap="round"/>
<line x1="653.0" y1="455.0" x2="694.0" y2="459.5" stroke="#000" stroke-width="2.2" stroke-linecap="round"/>
<line x1="653.6" y1="483.0" x2="694.6" y2="487.5" stroke="#000" stroke-width="2.2" stroke-linecap="round"/>
<polygon points="653.6,483.0 694.6,487.5 694.8,495.0 653.8,490.5" fill="#45a3c4" />
<line x1="653.6" y1="491.0" x2="694.6" y2="495.5" stroke="#000" stroke-width="1.6" stroke-linecap="round"/>
<polygon points="580.0,236.0 615.0,252.0 615.6,283.5 581.0,268.0" fill="url(#gcor)" />
<polygon points="581.0,268.0 598.0,275.5 601.0,404.0 585.0,410.0" fill="url(#gin)" />
<polygon points="598.0,275.5 615.5,283.2 617.8,414.0 601.0,404.0" fill="#ffffff" />
<polygon points="585.0,410.0 601.0,404.0 617.5,414.0 620.0,464.0 585.0,447.0" fill="url(#gfl)" />
<line x1="585.0" y1="410.0" x2="601.0" y2="404.0" stroke="#000" stroke-width="1.2" stroke-linecap="round"/>
<line x1="601.0" y1="404.0" x2="617.5" y2="414.0" stroke="#000" stroke-width="1.2" stroke-linecap="round"/>
<line x1="581.0" y1="268.0" x2="615.5" y2="283.2" stroke="#000" stroke-width="2.2" stroke-linecap="round"/>
<polygon points="585.0,447.0 620.0,464.0 620.0,471.0 585.0,454.0" fill="#45a3c4" />
<line x1="585.0" y1="455.0" x2="620.0" y2="472.0" stroke="#000" stroke-width="1.6" stroke-linecap="round"/>
<polygon points="435.0,259.0 595.0,196.0 712.0,270.0 689.0,279.0 649.0,274.0 615.0,252.0 580.0,236.0 540.0,251.0 498.0,268.0 455.0,269.0" fill="#bdb9ae" stroke="#000" stroke-width="1.6" stroke-linejoin="round"/>
<line x1="466.0" y1="247.0" x2="497.0" y2="268.0" stroke="#000" stroke-width="3" stroke-linecap="round"/>
<line x1="505.0" y1="231.0" x2="539.0" y2="252.0" stroke="#000" stroke-width="3" stroke-linecap="round"/>
<line x1="547.0" y1="214.0" x2="615.0" y2="252.0" stroke="#000" stroke-width="3" stroke-linecap="round"/>
<line x1="656.0" y1="235.0" x2="616.0" y2="253.0" stroke="#000" stroke-width="3" stroke-linecap="round"/>
<line x1="688.0" y1="255.0" x2="649.0" y2="273.0" stroke="#000" stroke-width="3" stroke-linecap="round"/>
<line x1="455.0" y1="269.0" x2="498.0" y2="268.0" stroke="#000" stroke-width="2.8" stroke-linecap="round"/>
<line x1="498.0" y1="268.0" x2="540.0" y2="251.0" stroke="#000" stroke-width="2.8" stroke-linecap="round"/>
<line x1="540.0" y1="251.0" x2="580.0" y2="236.0" stroke="#000" stroke-width="2.8" stroke-linecap="round"/>
<line x1="615.0" y1="252.0" x2="649.0" y2="273.0" stroke="#000" stroke-width="2.8" stroke-linecap="round"/>
<line x1="649.0" y1="274.0" x2="689.0" y2="279.0" stroke="#000" stroke-width="2.8" stroke-linecap="round"/>
<line x1="498.0" y1="268.0" x2="502.8" y2="488.0" stroke="#000" stroke-width="3.2" stroke-linecap="round"/>
<line x1="540.0" y1="251.0" x2="544.8" y2="467.0" stroke="#000" stroke-width="3.2" stroke-linecap="round"/>
<line x1="581.0" y1="236.0" x2="585.7" y2="449.0" stroke="#000" stroke-width="3.2" stroke-linecap="round"/>
<line x1="615.5" y1="252.0" x2="620.2" y2="466.0" stroke="#000" stroke-width="3.2" stroke-linecap="round"/>
<line x1="649.0" y1="273.0" x2="653.7" y2="486.0" stroke="#000" stroke-width="3.2" stroke-linecap="round"/>
<polygon points="435.0,259.0 455.0,269.0 459.5,487.0 441.0,476.0" fill="#2a88e0" />
<line x1="435.5" y1="260.0" x2="441.0" y2="475.5" stroke="#8fa9c4" stroke-width="1.0" stroke-linecap="round"/>
<line x1="441.0" y1="476.0" x2="459.5" y2="487.0" stroke="#222" stroke-width="1.4" stroke-linecap="round"/>
<line x1="454.5" y1="270.0" x2="458.5" y2="486.0" stroke="#0b4fb5" stroke-width="2.2" stroke-linecap="round"/>
<line x1="436.0" y1="259.5" x2="454.0" y2="268.5" stroke="#dfe6ea" stroke-width="1.6" stroke-linecap="round"/>
<polygon points="689.0,279.0 712.0,270.0 718.5,486.0 694.5,495.0" fill="#48a6c2" stroke="#000" stroke-width="1.8" stroke-linejoin="round"/>
<line x1="689.5" y1="280.0" x2="694.0" y2="494.0" stroke="#000" stroke-width="2.4" stroke-linecap="round"/>
<polygon points="456.0,271.0 467.0,272.0 466.0,279.0 456.5,283.0" fill="#ffffff" />
<polygon points="456.0,326.2 466.0,326.2 456.5,330.5" fill="#ffffff" />
<polygon points="456.0,351.2 466.0,351.2 456.5,355.5" fill="#ffffff" />
<polygon points="456.0,376.2 466.0,376.2 456.5,380.5" fill="#ffffff" />
<polygon points="457.5,382.3 522.0,356.5 525.4,432.0 457.5,457.8" fill="rgba(240,165,40,0.42)" stroke="rgba(225,145,25,0.6)" stroke-width="0.9"/>
<polygon points="457.5,392.0 498.0,380.0 500.0,440.0 457.5,460.0" fill="rgba(250,175,45,0.28)" />
<polygon points="456.5,403.0 472.0,403.0 456.5,408.0" fill="rgba(255,190,70,0.85)" />
<polygon points="456.5,427.0 472.0,427.0 456.5,432.0" fill="rgba(255,190,70,0.85)" />
<polygon points="456.5,454.0 472.0,454.0 456.5,459.0" fill="rgba(255,190,70,0.85)" />
<polygon points="503.5,424.0 510.3,423.0 510.3,437.0 503.5,438.0" fill="rgba(255,195,80,0.85)" />
<polygon points="382.5,349.5 438.3,380.5 438.3,458.5 384.4,425.0" fill="rgba(62,118,178,0.66)" stroke="rgba(60,110,175,0.8)" stroke-width="0.8"/>
<polygon points="384.4,425.0 526.0,402.0 530.0,436.0 459.0,482.0 441.0,471.0 438.3,458.5" fill="rgba(125,125,115,0.22)" />
<line x1="438.0" y1="381.0" x2="438.0" y2="458.0" stroke="rgba(255,255,255,0.7)" stroke-width="1.0" stroke-linecap="round"/>
<path d="M445.6,374.5 L399,393" stroke="#6e6e6e" stroke-width="4.4" stroke-linecap="round"/>
<path d="M445.6,374.5 L399,393" stroke="#fff" stroke-width="2.4" stroke-linecap="round"/>
<path d="M386.3,397.4 L396.6,388 L401.6,398.3 Z" fill="#fff" stroke="#6e6e6e" stroke-width="1.1" stroke-linejoin="round"/>
<path d="M376.3,430.3 L439.7,470.7" stroke="#27e027" stroke-width="2.8" stroke-dasharray="28,4,8,4,60"/>
<path d="M452,470 L536,437" stroke="#e02a2a" stroke-width="1.7" stroke-dasharray="9,5" opacity="0.85"/>
<path d="M443.7,384.5 L445,467" stroke="#2a5fd8" stroke-width="2" stroke-dasharray="20,5,7,5"/>
<circle cx="446.4" cy="473.4" r="4.4" fill="#7aa2e6" stroke="#5b86d6" stroke-width="1"/>
<ellipse cx="1284" cy="97" rx="26" ry="8" fill="rgba(0,0,0,0.10)" filter="url(#blur2)"/>
<path d="M1258,52 L1281,64.5 L1281,101 L1258,83 Z" fill="#d8d8d8"/>
<path d="M1281,64.5 L1311,54.5 L1311,84.5 L1281,101 Z" fill="#dddddd"/>
<path d="M1258,52 L1286,43.5 L1311,54.5 L1281,64.5 Z" fill="#ebebeb"/>
<path d="M1258,52 L1286,43.5 L1311,54.5 L1281,64.5 Z M1311,54.5 L1311,84.5 M1258,52 L1258,83" fill="none" stroke="#8e8e8e" stroke-width="1" stroke-dasharray="3.5,2"/>
<text x="0" y="0" font-size="7.5" fill="#7e7e7e" transform="translate(1288 80) rotate(-21)" font-family="Liberation Sans">RIGHT</text>
<text x="0" y="0" font-size="5.8" fill="#8a8a8a" transform="translate(1261 69) rotate(24)" font-family="Liberation Sans">FRONT</text>
<text x="0" y="0" font-size="5" fill="#a8a8a8" transform="translate(1284 50) rotate(18)" font-family="Liberation Sans">TOP</text>
<line x1="1281" y1="101" x2="1280" y2="52" stroke="#3434e0" stroke-width="2.2"/>
<line x1="1281" y1="101" x2="1313" y2="85" stroke="#e44a4a" stroke-width="1.7"/>
<line x1="1281" y1="101" x2="1258" y2="81" stroke="#45c845" stroke-width="1.7"/>
<text x="1275" y="56" font-size="10" fill="#4646f0" font-family="Liberation Sans">Z</text>
<text x="1312" y="87" font-size="9" fill="#f06a6a" font-family="Liberation Sans">X</text>
<text x="1252" y="80" font-size="9" fill="#6ade6a" font-family="Liberation Sans">Y</text>
<path d="M539,557 q-4,-4 0,-7 q2,-4 5,-3 q4,-2 5,3 q3,1 1,5" fill="none" stroke="#333" stroke-width="1.2"/>
<path d="M543,553 h4 M545,551 v4" stroke="#1a7be0" stroke-width="1.4"/>
<path d="M556,553 h6 l-3,4z" fill="#333"/>
<path d="M569,557 v-6 h15 v6 M569,551 l4,-3 l4,1.5 l4,-2.5 l1,3" fill="#d6d6d6" stroke="#444" stroke-width="1.2"/>
<rect x="572" y="553.5" width="9" height="4" fill="#fff" stroke="#444" stroke-width="1"/>
<path d="M596,557 l-2,-3 q0,-1 1.5,-0.5 l1.5,1.5 v-6 q0,-1.2 1.2,-1.2 q1.2,0 1.2,1.2 v-1.5 q0,-1.2 1.2,-1.2 q1.2,0 1.2,1.2 v1 q0,-1.2 1.2,-1.2 q1.2,0 1.2,1.2 v1.5 q0,-1 1.1,-1 q1.1,0 1.1,1 v6" fill="#eee" stroke="#333" stroke-width="1.1"/>
<circle cx="626" cy="555" r="5.5" fill="#dfe9ec" stroke="#333" stroke-width="1.3"/>
<path d="M632.5,548.5 h4 M634.5,546.5 v4 M632.5,552 h4" stroke="#333" stroke-width="1"/>
<circle cx="653" cy="556" r="6.5" fill="#dfe9ec" stroke="#333" stroke-width="1.3"/>
<path d="M647,547 h3 M656,547 h3 M661,548 v3 M661,554 v3" stroke="#333" stroke-width="1"/>
<path d="M667,553 h6 l-3,4z" fill="#333"/>
<rect x="679.5" y="547.5" width="15" height="11" fill="#fff" stroke="#444" stroke-width="1.2"/>
<rect x="682" y="550" width="10" height="8" fill="#9ab8e0" stroke="#2a4a8a" stroke-width="1"/>
<path d="M697,553 h6 l-3,4z" fill="#333"/>
<rect x="710" y="547.5" width="16" height="11" fill="#fff" stroke="#555" stroke-width="1.2"/>
<path d="M714,547 v11 M718,547 v11 M722,547 v11 M710,551 h16 M710,555 h16" stroke="#777" stroke-width="1"/>
<path d="M728.5,553 h6 l-3,4z" fill="#333"/>
<rect x="741" y="548" width="15" height="11" rx="1" fill="#9ab8e0" stroke="#2a4a8a" stroke-width="1.3"/>
<path d="M748.5,548 v11 M741,553.5 h15" stroke="#2a4a8a" stroke-width="1.2"/>
<path d="M759.3,553 h6 l-3,4z" fill="#333"/>
</svg>
</body></html>
